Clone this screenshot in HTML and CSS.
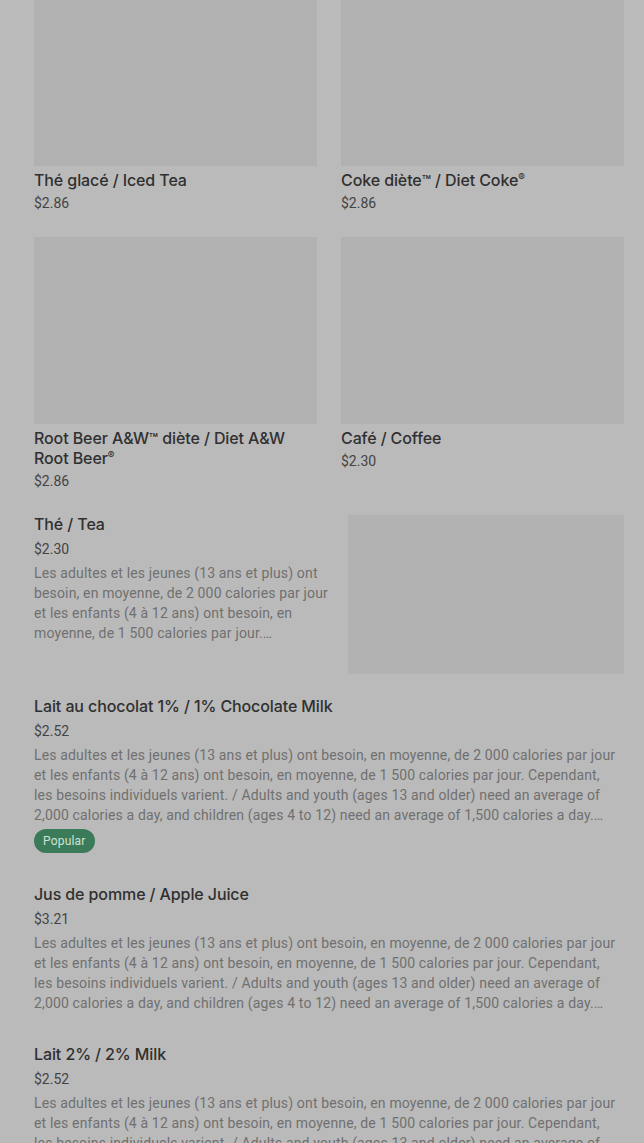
FILE: index.html
```html
<!DOCTYPE html>
<html lang="fr">
<head>
<meta charset="utf-8">
<title>Boissons</title>
<link rel="stylesheet" href="styles.css">
</head>
<body>
<main class="menu">
  <section class="grid">
    <article class="card">
      <div class="thumb"></div>
      <h3 class="title">Thé glacé / Iced Tea</h3>
      <p class="price">$2.86</p>
    </article>
    <article class="card">
      <div class="thumb"></div>
      <h3 class="title">Coke diète<span class="tm">™</span> / Diet Coke<span class="reg">®</span></h3>
      <p class="price">$2.86</p>
    </article>
    <article class="card">
      <div class="thumb"></div>
      <h3 class="title">Root Beer A&amp;W<span class="tm">™</span> diète / Diet A&amp;W Root Beer<span class="reg">®</span></h3>
      <p class="price">$2.86</p>
    </article>
    <article class="card">
      <div class="thumb"></div>
      <h3 class="title">Café / Coffee</h3>
      <p class="price">$2.30</p>
    </article>
  </section>

  <section class="list">
    <article class="item item-img">
      <div class="info">
        <h3 class="title">Thé / Tea</h3>
        <p class="price">$2.30</p>
        <p class="desc">Les adultes et les jeunes (13 ans et plus) ont besoin, en moyenne, de 2&nbsp;000 calories par jour et les enfants (4 à 12 ans) ont besoin, en moyenne, de 1&nbsp;500 calories par jour. Cependant, les besoins individuels varient. / Adults and youth (ages 13 and older) need an average of 2,000 calories a day, and children (ages 4 to 12) need an average of 1,500 calories a day. However, individual needs vary.</p>
      </div>
      <div class="side-thumb"></div>
    </article>
    <article class="item">
      <div class="info">
        <h3 class="title">Lait au chocolat 1% / 1% Chocolate Milk</h3>
        <p class="price">$2.52</p>
        <p class="desc">Les adultes et les jeunes (13 ans et plus) ont besoin, en moyenne, de 2&nbsp;000 calories par jour et les enfants (4 à 12 ans) ont besoin, en moyenne, de 1&nbsp;500 calories par jour. Cependant, les besoins individuels varient. / Adults and youth (ages 13 and older) need an average of 2,000 calories a day, and children (ages 4 to 12) need an average of 1,500 calories a day. However, individual needs vary.</p>
        <span class="pill">Popular</span>
      </div>
    </article>
    <article class="item">
      <div class="info">
        <h3 class="title">Jus de pomme / Apple Juice</h3>
        <p class="price">$3.21</p>
        <p class="desc">Les adultes et les jeunes (13 ans et plus) ont besoin, en moyenne, de 2&nbsp;000 calories par jour et les enfants (4 à 12 ans) ont besoin, en moyenne, de 1&nbsp;500 calories par jour. Cependant, les besoins individuels varient. / Adults and youth (ages 13 and older) need an average of 2,000 calories a day, and children (ages 4 to 12) need an average of 1,500 calories a day. However, individual needs vary.</p>
      </div>
    </article>
    <article class="item">
      <div class="info">
        <h3 class="title">Lait 2% / 2% Milk</h3>
        <p class="price">$2.52</p>
        <p class="desc">Les adultes et les jeunes (13 ans et plus) ont besoin, en moyenne, de 2&nbsp;000 calories par jour et les enfants (4 à 12 ans) ont besoin, en moyenne, de 1&nbsp;500 calories par jour. Cependant, les besoins individuels varient. / Adults and youth (ages 13 and older) need an average of 2,000 calories a day, and children (ages 4 to 12) need an average of 1,500 calories a day. However, individual needs vary.</p>
      </div>
    </article>
  </section>
</main>
</body>
</html>
```
FILE: styles.css
```css
* { box-sizing: border-box; }
html, body {
  margin: 0;
  padding: 0;
  background: #bababa;
  height: 100%;
  overflow: hidden;
}
body {
  font-family: Roboto, "Liberation Sans", Arial, sans-serif;
  color: #2d2d2d;
}
.menu {
  padding: 0 20px 0 34px;
}
.grid {
  margin-top: -21px;
  display: grid;
  grid-template-columns: 283px 283px;
  column-gap: 24px;
  row-gap: 24px;
}
.thumb {
  height: 187px;
  background: #b1b1b1;
}
.title {
  margin: 0;
  font-family: Inter, Roboto, "Liberation Sans", sans-serif;
  font-size: 16px;
  line-height: 20px;
  font-weight: 500;
  color: #303030;
  letter-spacing: -0.1px;
}
.tm {
  font-size: 15px;
  line-height: 0;
}
.reg {
  font-size: 10px;
  vertical-align: 5px;
  line-height: 0;
}
.card .title {
  margin-top: 4px;
}
.price {
  margin: 3px 0 0;
  font-size: 14px;
  line-height: 20px;
  color: #444444;
}
.list {
  display: flex;
  flex-direction: column;
  padding-top: 23px;
}
.item {
  display: flex;
  padding-bottom: 31px;
}
.item .price {
  margin-top: 5px;
}
.item-img {
  gap: 16px;
  padding-bottom: 22px;
}
.info {
  flex: 1;
  min-width: 0;
}
.item-img .info {
  flex: 0 0 298px;
}
.side-thumb {
  width: 276px;
  height: 159px;
  margin-top: 1px;
  background: #b2b2b2;
}
.desc {
  margin: 4px 6px 0 0;
  font-size: 14px;
  line-height: 20px;
  letter-spacing: 0.15px;
  color: #707070;
  display: -webkit-box;
  -webkit-box-orient: vertical;
  -webkit-line-clamp: 4;
  overflow: hidden;
}
.item-img .desc {
  margin-right: 0;
}
.pill {
  display: inline-block;
  margin-top: 4px;
  height: 24px;
  line-height: 24px;
  padding: 0 9px;
  border-radius: 12px;
  background: #3c7b59;
  color: #cfe2d6;
  font-size: 12px;
  letter-spacing: 0.2px;
}
```
